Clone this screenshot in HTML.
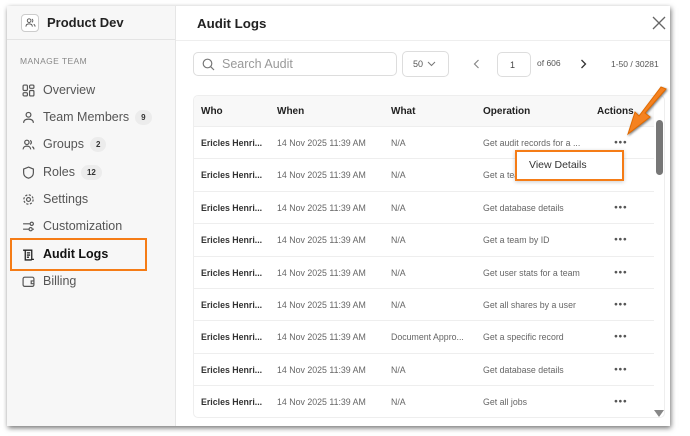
<!DOCTYPE html>
<html><head><style>
*{box-sizing:border-box;margin:0;padding:0}
body{width:690px;height:436px;background:#fff;font-family:"Liberation Sans",sans-serif;position:relative;overflow:hidden}
.frame{position:absolute;left:7px;top:6px;width:663px;height:420px;background:#fff;box-shadow:1px 2px 5px rgba(0,0,0,.55);overflow:hidden}
.side{position:absolute;left:0;top:0;width:169px;height:420px;background:#f7f7f7;border-right:1px solid #e6e6e6}
.shead{height:34px;border-bottom:1px solid #e4e4e4;display:flex;align-items:center;padding-left:14px;font-weight:bold;font-size:13px;color:#222}
.logo{width:18px;height:18px;border:1px solid #ccc;border-radius:4px;background:#fff;margin-right:8px;display:flex;align-items:center;justify-content:center}
.mt{position:absolute;left:13px;top:50px;font-size:8.5px;color:#888;letter-spacing:.4px}
.item{position:absolute;left:15px;height:20px;display:flex;align-items:center;font-size:12.5px;color:#555}
.item svg{margin-right:8px}
.badge{margin-left:6px;background:#ececec;border-radius:9px;font-size:8px;color:#333;padding:3px 6px;font-weight:bold}
.hl{position:absolute;left:3px;top:232px;width:137px;height:33px;border:2.5px solid #f57c16}
.title{position:absolute;left:190px;top:10px;font-weight:bold;font-size:13.3px;color:#222}
.hline{position:absolute;left:169px;top:34px;width:494px;height:1px;background:#eee}
.close{position:absolute;left:645px;top:10px}
.inp{position:absolute;border:1px solid #ddd;border-radius:5px;background:#fff;font-size:12px;color:#999;display:flex;align-items:center}
.t{position:absolute;left:186px;top:89px;width:472px;height:323px;border:1px solid #eee;border-radius:5px;overflow:hidden}
.row{position:absolute;left:0;width:460px;height:32.4px;border-bottom:1px solid #eee;font-size:8.8px;color:#666}
.row span{position:absolute;top:11px;white-space:nowrap}
.hdr{background:#f8f8f8;height:31px;font-size:10px;font-weight:bold;color:#222}
.hdr span{top:10px;color:#222}
.c1{left:7px;color:#333;font-weight:bold}
.c2{left:83px}.c3{left:197px}.c4{left:289px}.c5{left:420px;color:#555;font-size:6.5px;letter-spacing:.5px;top:12px!important}
</style></head><body>
<div class="frame">
<div class="side">
<div class="shead"><div class="logo"><svg width="11" height="11" viewBox="0 0 12 12" fill="none" stroke="#555" stroke-width="1"><circle cx="4.5" cy="4" r="2"/><path d="M1 10.5c0-2 1.5-3 3.5-3s3.5 1 3.5 3M7.5 2.2a2 2 0 010 3.6M9.5 8c1 .5 1.5 1.3 1.5 2.5"/></svg></div>Product Dev</div>
<div class="mt">MANAGE TEAM</div>
<div class="item" style="top:74px"><svg width="13" height="13" viewBox="0 0 12 12" fill="none" stroke="#555" stroke-width="1.1"><rect x="1" y="1" width="4" height="5" rx="1"/><rect x="7" y="1" width="4" height="3" rx="1"/><rect x="1" y="8" width="4" height="3" rx="1"/><rect x="7" y="6" width="4" height="5" rx="1"/></svg>Overview</div>
<div class="item" style="top:101px"><svg width="13" height="13" viewBox="0 0 12 12" fill="none" stroke="#555" stroke-width="1.1"><circle cx="6" cy="3.5" r="2.2"/><path d="M1.5 11c0-2.5 2-3.5 4.5-3.5s4.5 1 4.5 3.5"/></svg>Team Members<span class="badge">9</span></div>
<div class="item" style="top:128px"><svg width="13" height="13" viewBox="0 0 12 12" fill="none" stroke="#555" stroke-width="1.1"><circle cx="4.5" cy="4" r="2"/><path d="M1 10.5c0-2 1.5-3 3.5-3s3.5 1 3.5 3M7.5 2.2a2 2 0 010 3.6M9.5 8c1 .5 1.5 1.3 1.5 2.5"/></svg>Groups<span class="badge">2</span></div>
<div class="item" style="top:156px"><svg width="13" height="13" viewBox="0 0 12 12" fill="none" stroke="#555" stroke-width="1.1"><path d="M6 1l4.5 1.8v3.5c0 2.5-2 4.2-4.5 5-2.5-.8-4.5-2.5-4.5-5V2.8z"/></svg>Roles<span class="badge">12</span></div>
<div class="item" style="top:183px"><svg width="13" height="13" viewBox="0 0 12 12" fill="none" stroke="#555" stroke-width="1.1"><circle cx="6" cy="6" r="1.8"/><circle cx="6" cy="6" r="4.3" stroke-dasharray="2 1.4"/></svg>Settings</div>
<div class="item" style="top:210px"><svg width="13" height="13" viewBox="0 0 12 12" fill="none" stroke="#555" stroke-width="1.1"><path d="M1 3.5h6M10 8.5h1M1 8.5h5"/><circle cx="9" cy="3.5" r="1.5"/><circle cx="8" cy="8.5" r="1.5"/></svg>Customization</div>
<div class="item" style="top:238px;color:#111;font-weight:bold"><svg width="13" height="13" viewBox="0 0 12 12" fill="none" stroke="#222" stroke-width="1.2"><path d="M1 2h8v8.5h2M3 2v9h6M4.5 4.5h3M4.5 6.5h3M4.5 8.5h2"/></svg>Audit Logs</div>
<div class="item" style="top:265px"><svg width="13" height="13" viewBox="0 0 12 12" fill="none" stroke="#555" stroke-width="1.1"><rect x="1" y="2" width="10" height="8.5" rx="1.5"/><path d="M11 5.5H8.5v2.5H11"/></svg>Billing</div>
<div class="hl"></div>
</div>
<div class="title">Audit Logs</div>
<div class="hline"></div>
<svg class="close" width="14" height="14" viewBox="0 0 14 14" stroke="#666" stroke-width="1.3"><path d="M1 1l12 12M13 1L1 13"/></svg>
<div class="inp" style="left:186px;top:46px;width:204px;height:24px;padding-left:8px;font-size:12.5px"><svg width="13" height="13" viewBox="0 0 13 13" fill="none" stroke="#777" stroke-width="1.2" style="margin-right:7px"><circle cx="5.5" cy="5.5" r="4.3"/><path d="M8.7 8.7l3.3 3.3"/></svg>Search Audit</div>
<div class="inp" style="left:395px;top:45px;width:47px;height:26px;padding-left:10px;font-size:9px;color:#555">50 <svg width="9" height="6" viewBox="0 0 9 6" fill="none" stroke="#777" style="margin-left:4px"><path d="M1 1l3.5 3.5L8 1"/></svg></div>
<svg style="position:absolute;left:466px;top:53px" width="7" height="10" viewBox="0 0 7 10" fill="none" stroke="#888" stroke-width="1.2"><path d="M5.5 1L1.5 5l4 4"/></svg>
<div class="inp" style="left:490px;top:46px;width:34px;height:25px;padding-left:12px;font-size:9px;color:#444">1</div>
<div style="position:absolute;left:530px;top:52px;font-size:8.5px;color:#555">of 606</div>
<svg style="position:absolute;left:573px;top:53px" width="7" height="10" viewBox="0 0 7 10" fill="none" stroke="#333" stroke-width="1.3"><path d="M1.5 1l4 4-4 4"/></svg>
<div style="position:absolute;left:604px;top:53px;font-size:8.5px;color:#555">1-50 / 30281</div>
<div class="t">
<div class="row hdr" style="top:0"><span class="c1">Who</span><span class="c2" style="font-size:10px">When</span><span class="c3">What</span><span class="c4">Operation</span><span style="left:403px">Actions</span></div>
<div class="row" style="top:31px"><span class="c1">Ericles Henri...</span><span class="c2">14 Nov 2025 11:39 AM</span><span class="c3">N/A</span><span class="c4">Get audit records for a ...</span><span class="c5">●●●</span></div>
<div class="row" style="top:63.4px"><span class="c1">Ericles Henri...</span><span class="c2">14 Nov 2025 11:39 AM</span><span class="c3">N/A</span><span class="c4">Get a team</span></div>
<div class="row" style="top:95.8px"><span class="c1">Ericles Henri...</span><span class="c2">14 Nov 2025 11:39 AM</span><span class="c3">N/A</span><span class="c4">Get database details</span><span class="c5">●●●</span></div>
<div class="row" style="top:128.2px"><span class="c1">Ericles Henri...</span><span class="c2">14 Nov 2025 11:39 AM</span><span class="c3">N/A</span><span class="c4">Get a team by ID</span><span class="c5">●●●</span></div>
<div class="row" style="top:160.6px"><span class="c1">Ericles Henri...</span><span class="c2">14 Nov 2025 11:39 AM</span><span class="c3">N/A</span><span class="c4">Get user stats for a team</span><span class="c5">●●●</span></div>
<div class="row" style="top:193px"><span class="c1">Ericles Henri...</span><span class="c2">14 Nov 2025 11:39 AM</span><span class="c3">N/A</span><span class="c4">Get all shares by a user</span><span class="c5">●●●</span></div>
<div class="row" style="top:225.4px"><span class="c1">Ericles Henri...</span><span class="c2">14 Nov 2025 11:39 AM</span><span class="c3">Document Appro...</span><span class="c4">Get a specific record</span><span class="c5">●●●</span></div>
<div class="row" style="top:257.8px"><span class="c1">Ericles Henri...</span><span class="c2">14 Nov 2025 11:39 AM</span><span class="c3">N/A</span><span class="c4">Get database details</span><span class="c5">●●●</span></div>
<div class="row" style="top:290.2px"><span class="c1">Ericles Henri...</span><span class="c2">14 Nov 2025 11:39 AM</span><span class="c3">N/A</span><span class="c4">Get all jobs</span><span class="c5">●●●</span></div>
<div style="position:absolute;left:462px;top:24px;width:7px;height:55px;background:#777;border-radius:4px"></div>
<svg style="position:absolute;left:460px;top:314px" width="10" height="7"><path d="M0 0h10L5 7z" fill="#888"/></svg>
</div>
<div style="position:absolute;left:508px;top:144px;width:109px;height:31px;background:#fff;border:2.5px solid #f57c16;box-shadow:0 1px 4px rgba(0,0,0,.2);font-size:10.5px;color:#333;padding:7px 0 0 12px">View Details</div>
</div>
<svg style="position:absolute;left:615px;top:86px" width="55" height="55" viewBox="0 0 55 55"><path d="M51 3L30 27l5 4-22 17 7-22 4 4L46 1z" fill="#f58220" stroke="#e06a00" stroke-width="1" style="filter:drop-shadow(1px 1px 1px rgba(0,0,0,.5))"/></svg>
</body></html>
